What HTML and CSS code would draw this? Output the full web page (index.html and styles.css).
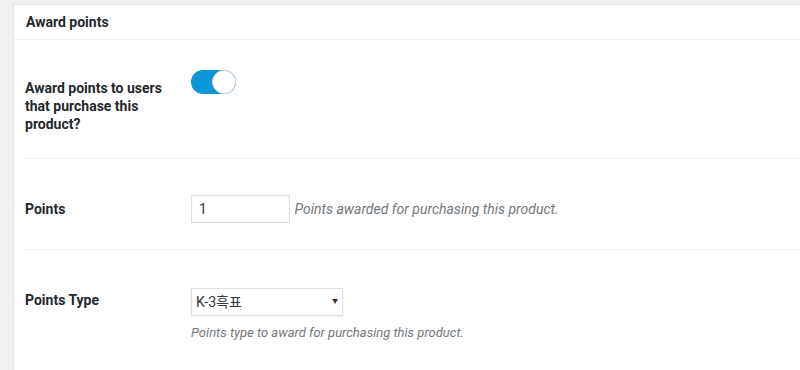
FILE: index.html
```html
<!DOCTYPE html>
<html lang="en">

<head>
    <meta charset="UTF-8">
    <meta name="viewport" content="width=device-width, initial-scale=1.0">
    <title>Award points</title>
    <link rel="stylesheet" href="styles.css">
</head>

<body>
    <div class="panel">
        <h2 class="panel-title">Award points</h2>
        <div class="panel-body">
            <div class="row row-toggle">
                <div class="label">Award points to users that purchase this product?</div>
                <div class="field">
                    <label class="switch">
                        <input type="checkbox" checked>
                        <span class="slider"></span>
                    </label>
                </div>
            </div>
            <div class="row row-points">
                <div class="label">Points</div>
                <div class="field">
                    <input class="text-input" type="text" value="1">
                    <span class="desc">Points awarded for purchasing this product.</span>
                </div>
            </div>
            <div class="row row-type">
                <div class="label">Points Type</div>
                <div class="field">
                    <div class="select-wrap">
                        <select class="select">
                            <option>K-3흑표</option>
                        </select>
                    </div>
                    <p class="desc block">Points type to award for purchasing this product.</p>
                </div>
            </div>
        </div>
    </div>
</body>

</html>
```

FILE: styles.css
```css
body {
    margin: 0;
    background-color: #f1f1f1;
    font-family: Roboto, "Noto Sans CJK KR", sans-serif;
    font-size: 14px;
    line-height: 18px;
    color: #23282d;
    overflow: hidden;
}

.panel {
    margin: 4px 0 0 13px;
    height: 366px;
    box-sizing: border-box;
    background-color: #fff;
    border: 1px solid #e5e5e5;
    border-right: none;
    border-bottom: none;
}

.panel-title {
    margin: 0;
    padding: 8px 12px;
    font-size: 14px;
    line-height: 18px;
    font-weight: 700;
    border-bottom: 1px solid #eee;
}

.panel-body {
    padding-left: 11px;
}

.row {
    display: flex;
    align-items: flex-start;
    border-bottom: 1px solid #eee;
}

.row-toggle {
    padding: 30px 0 25px;
}

.row-toggle .label {
    margin-top: 9px;
}

.row-points {
    padding: 36px 0 26px;
}

.row-points .label {
    margin-top: 5px;
}

.row-type {
    padding: 38px 0 0;
    border-bottom: none;
}

.row-type .label {
    margin-top: 3px;
}

.label {
    width: 150px;
    margin-right: 16px;
    flex-shrink: 0;
    font-weight: 700;
    font-size: 14px;
    line-height: 18px;
}

/* toggle */
.switch {
    display: block;
    position: relative;
    width: 45px;
    height: 24px;
}

.switch input {
    display: none;
}

.slider {
    display: block;
    width: 45px;
    height: 24px;
    border-radius: 12px;
    background-color: #0b96d8;
}

.slider::after {
    content: "";
    position: absolute;
    top: 0;
    right: 0;
    width: 22px;
    height: 22px;
    border-radius: 50%;
    background-color: #fff;
    border: 1px solid #dcdcdc;
}

/* inputs */
.text-input {
    box-sizing: border-box;
    width: 99px;
    height: 28px;
    padding: 3px 7px;
    border: 1px solid #ddd;
    box-shadow: inset 0 1px 2px rgba(0, 0, 0, 0.07);
    font-family: Roboto, sans-serif;
    font-size: 14px;
    color: #32373c;
    vertical-align: middle;
    margin: 0;
}

.desc {
    font-style: italic;
    color: #72777c;
    font-size: 14px;
    margin-left: 1px;
    vertical-align: middle;
}

.desc.block {
    display: block;
    font-size: 13px;
    margin: 8px 0 0;
}

.select-wrap {
    position: relative;
    width: 152px;
}

.select {
    box-sizing: border-box;
    appearance: none;
    -webkit-appearance: none;
    width: 152px;
    height: 28px;
    padding: 2px 4px;
    border: 1px solid #ddd;
    box-shadow: 0 1px 2px rgba(0, 0, 0, 0.07);
    background-color: #fff;
    font-family: Roboto, "Noto Sans CJK KR", sans-serif;
    font-size: 14px;
    color: #32373c;
    margin: 0;
    border-radius: 0;
}

.select-wrap::after {
    content: "▼";
    position: absolute;
    right: 5px;
    top: 9px;
    font-size: 6px;
    line-height: 8px;
    color: #333;
    pointer-events: none;
}
```
